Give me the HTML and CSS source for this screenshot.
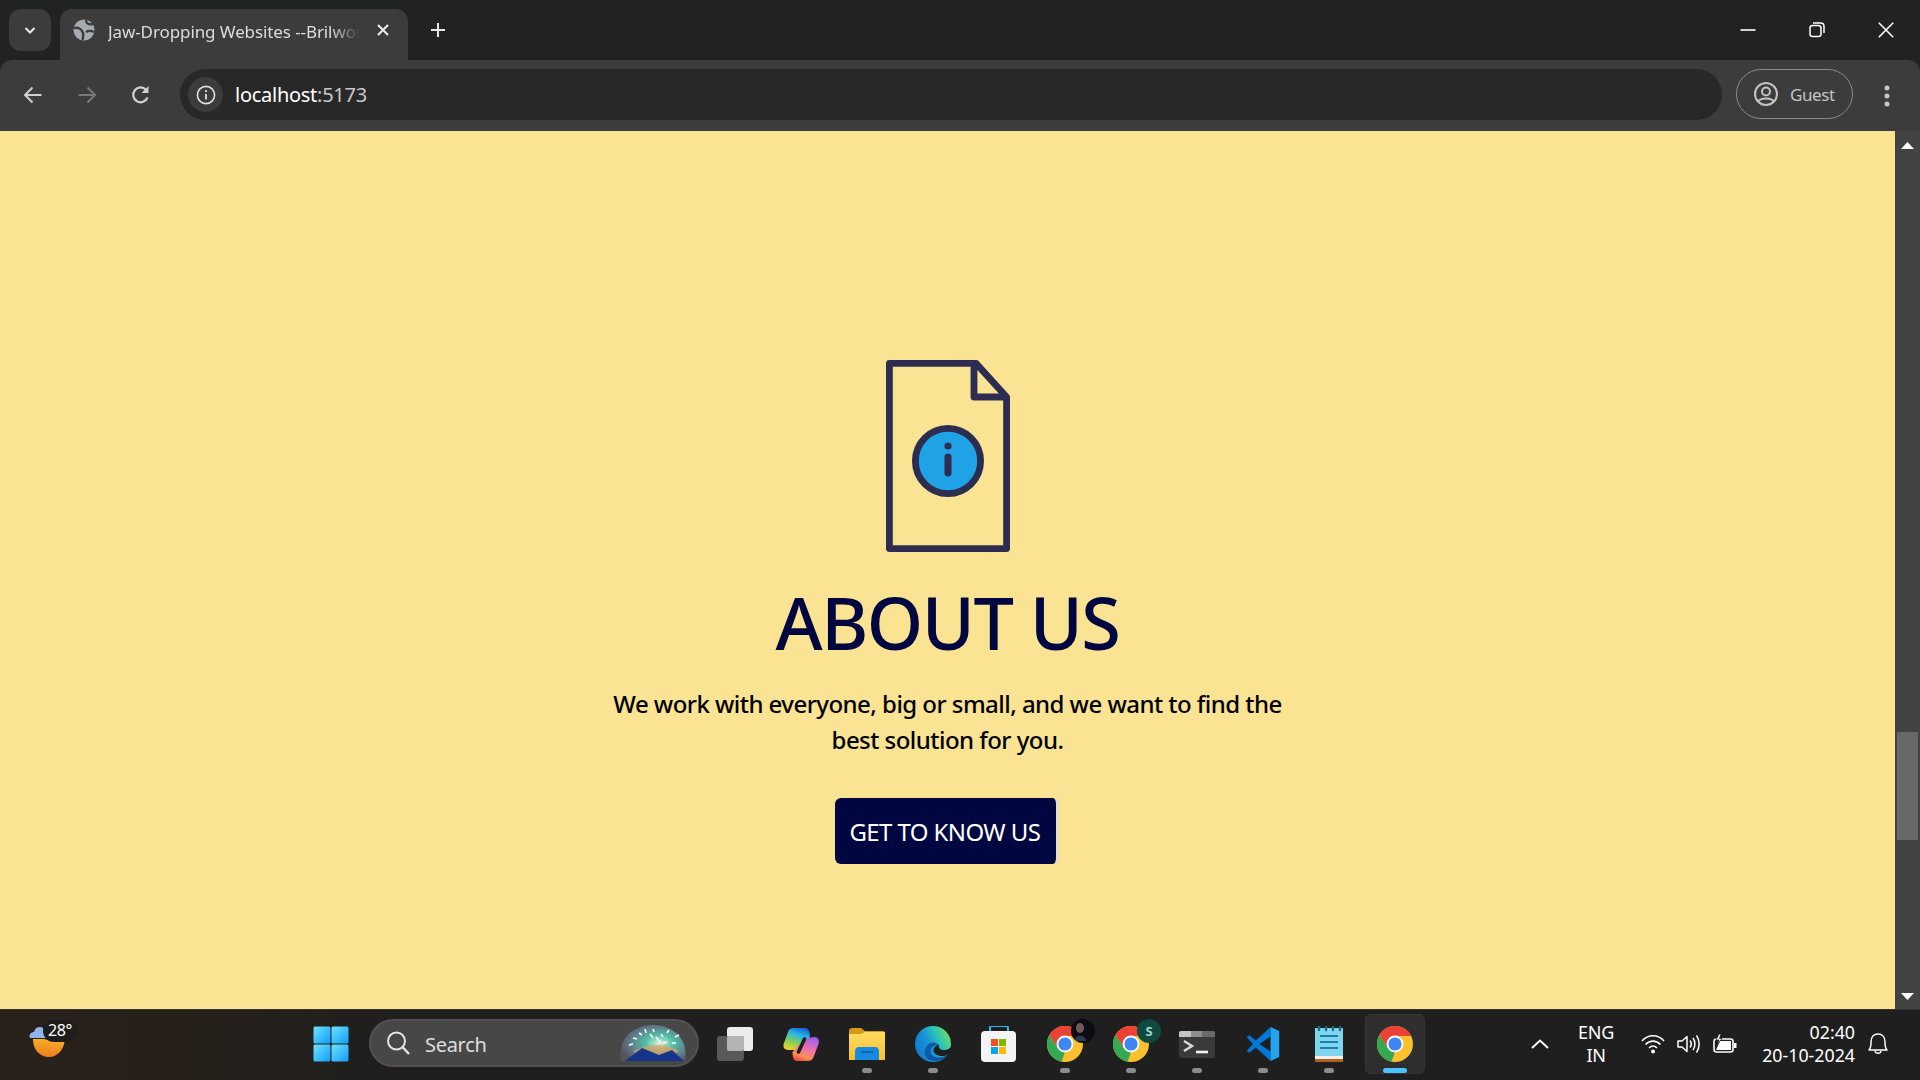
FILE: index.html
```html
<!DOCTYPE html>
<html lang="en">
<head>
<meta charset="utf-8">
<title>Jaw-Dropping Websites --Brilwork</title>
<link rel="stylesheet" href="styles.css">
</head>
<body>
<svg class="defs" width="0" height="0" aria-hidden="true">
  <defs>
    <symbol id="chrome" viewBox="0 0 36 36">
      <circle cx="18" cy="18" r="18" fill="#fbc02d"/>
      <path d="M2.4 9 L11 22 L18 26 L14.5 35.7 A18 18 0 0 1 2.4 9Z" fill="#34a853"/>
      <path d="M18 10 H34.1 A18 18 0 0 0 2.4 9 L11 22 A8 8 0 0 1 18 10Z" fill="#ea4335"/>
      <circle cx="18" cy="18" r="8.4" fill="#fff"/>
      <circle cx="18" cy="18" r="6.6" fill="#3f86f3"/>
    </symbol>
    <linearGradient id="winGrad" x1="0" y1="0" x2="1" y2="1">
      <stop offset="0" stop-color="#6fe2ff"/><stop offset="1" stop-color="#0f9dfb"/>
    </linearGradient>
    <linearGradient id="edgeGrad" x1="1" y1="0.3" x2="0" y2="0.8">
      <stop offset="0" stop-color="#6bdc62"/><stop offset=".3" stop-color="#2cc3bb"/><stop offset=".6" stop-color="#1490d8"/><stop offset="1" stop-color="#0f78cc"/>
    </linearGradient>
    <linearGradient id="copA" x1="0.7" y1="0" x2="0.3" y2="1">
      <stop offset="0" stop-color="#1763dc"/><stop offset=".3" stop-color="#25b4e4"/><stop offset=".65" stop-color="#7fd05a"/><stop offset="1" stop-color="#ecd12e"/>
    </linearGradient>
    <linearGradient id="copB" x1="0.7" y1="0" x2="0.3" y2="1">
      <stop offset="0" stop-color="#9a5ff0"/><stop offset=".45" stop-color="#ea6fb4"/><stop offset=".8" stop-color="#fb8f56"/><stop offset="1" stop-color="#f2503a"/>
    </linearGradient>
    <linearGradient id="folderGrad" x1="0" y1="0" x2="0" y2="1">
      <stop offset="0" stop-color="#ffdc62"/><stop offset="1" stop-color="#f8bf2e"/>
    </linearGradient>
    <linearGradient id="sunGrad" x1="0" y1="0" x2="0" y2="1">
      <stop offset="0" stop-color="#f9b224"/><stop offset="1" stop-color="#ee7f22"/>
    </linearGradient>
    <radialGradient id="bingGrad" cx=".6" cy=".5" r=".62">
      <stop offset="0" stop-color="#dff2d8"/><stop offset=".35" stop-color="#4fc0a6"/><stop offset=".7" stop-color="#5f7f8e"/><stop offset="1" stop-color="#55555c"/>
    </radialGradient>
  </defs>
</svg>

<header class="tabstrip">
  <div class="tab-search">
    <svg class="ico" width="16" height="16" viewBox="0 0 16 16"><path d="M3.5 6 L8 10.5 L12.5 6" fill="none" stroke="#e8e8e8" stroke-width="2"/></svg>
  </div>
  <div class="tab">
    <svg class="ico" width="22" height="22" viewBox="0 0 22 22">
      <circle cx="11" cy="11" r="10.5" fill="#a6abb2"/>
      <path d="M1 9 C6 8 9 11 10 14 C11 17 9 19 10 21 M13 13 C16 11 19 12 21 13 M13 1 C13 4 15 6 20 5" fill="none" stroke="#3c3c3c" stroke-width="2.4"/>
    </svg>
    <span class="tab-title">Jaw-Dropping Websites --Brilwork</span>
    <svg class="ico tab-close" width="14" height="14" viewBox="0 0 14 14"><path d="M2 2 L12 12 M12 2 L2 12" stroke="#ededed" stroke-width="2"/></svg>
  </div>
  <svg class="ico new-tab" width="16" height="16" viewBox="0 0 16 16"><path d="M8 1 V15 M1 8 H15" stroke="#e6e6e6" stroke-width="2"/></svg>
  <div class="window-controls">
    <svg class="ico" width="16" height="16" viewBox="0 0 16 16"><path d="M0.5 8 H15.5" stroke="#fff" stroke-width="1.6"/></svg>
    <svg class="ico" width="16" height="16" viewBox="0 0 16 16"><rect x="1" y="3.5" width="11" height="11" rx="2.5" fill="none" stroke="#fff" stroke-width="1.5"/><path d="M4 1 H11.5 Q15 1 15 4.5 V11" fill="none" stroke="#fff" stroke-width="1.5"/></svg>
    <svg class="ico" width="16" height="16" viewBox="0 0 16 16"><path d="M0.8 0.8 L15.2 15.2 M15.2 0.8 L0.8 15.2" stroke="#fff" stroke-width="1.6"/></svg>
  </div>
</header>

<nav class="toolbar">
  <svg class="ico nav-btn" width="20" height="20" viewBox="0 0 20 20"><path d="M18.5 10 H2 M9.5 2.5 L2 10 L9.5 17.5" fill="none" stroke="#d0d0d0" stroke-width="2"/></svg>
  <svg class="ico nav-btn" width="20" height="20" viewBox="0 0 20 20"><path d="M1.5 10 H18 M10.5 2.5 L18 10 L10.5 17.5" fill="none" stroke="#7a7a7a" stroke-width="2"/></svg>
  <svg class="ico nav-btn" width="20" height="20" viewBox="0 0 20 20"><path d="M16.5 12.5 A7.4 7.4 0 1 1 15 4.8" fill="none" stroke="#d0d0d0" stroke-width="2.2"/><path d="M17.5 1 V8 H10.5Z" fill="#d0d0d0"/></svg>
  <div class="omnibox">
    <span class="site-info">
      <svg class="ico" width="20" height="20" viewBox="0 0 20 20"><circle cx="10" cy="10" r="8.6" fill="none" stroke="#e0e0e0" stroke-width="1.6"/><path d="M10 9 V14.5" stroke="#e0e0e0" stroke-width="1.8"/><circle cx="10" cy="6.2" r="1.1" fill="#e0e0e0"/></svg>
    </span>
    <span class="url">localhost<span class="url-dim">:5173</span></span>
  </div>
  <div class="profile">
    <svg class="ico" width="24" height="24" viewBox="0 0 24 24"><circle cx="12" cy="12" r="11" fill="none" stroke="#c4c4c4" stroke-width="2"/><circle cx="12" cy="9.5" r="4" fill="none" stroke="#c4c4c4" stroke-width="2"/><path d="M4.5 19.5 C6 15.5 18 15.5 19.5 19.5" fill="none" stroke="#c4c4c4" stroke-width="2"/></svg>
    <span>Guest</span>
  </div>
  <div class="kebab"><i></i><i></i><i></i></div>
</nav>

<div class="viewport">
  <main class="page">
    <svg class="doc-icon" width="124" height="192" viewBox="0 0 124 192">
      <path d="M3.4 3.4 H90 L120.6 37 V188.6 H3.4Z" fill="none" stroke="#2c2d50" stroke-width="6.8" stroke-linejoin="round"/>
      <path d="M88 3.4 V37 H120.6" fill="none" stroke="#2c2d50" stroke-width="6.8" stroke-linejoin="round"/>
      <circle cx="62" cy="101" r="32.6" fill="#1fa3e6" stroke="#2c2d50" stroke-width="6.8"/>
      <circle cx="62" cy="86" r="3.6" fill="#2c2d50"/>
      <path d="M62 97 V113" stroke="#2c2d50" stroke-width="7" stroke-linecap="round"/>
    </svg>
    <h1 class="headline">ABOUT US</h1>
    <p class="lede">We work with everyone, big or small, and we want to find the<br>best solution for you.</p>
    <a class="cta">GET TO KNOW US</a>
  </main>
  <aside class="scrollbar">
    <svg class="ico arrow" width="13" height="7" viewBox="0 0 13 7"><path d="M6.5 0 L13 7 H0Z" fill="#fff"/></svg>
    <div class="thumb"></div>
    <svg class="ico arrow" width="13" height="7" viewBox="0 0 13 7"><path d="M6.5 7 L13 0 H0Z" fill="#fff"/></svg>
  </aside>
</div>

<footer class="taskbar">
  <div class="weather">
    <svg class="ico" width="40" height="36" viewBox="0 0 40 36">
      <path d="M5 16 C5 28 13 34 21 34 C30 34 37 26 37 14 L28 14 C26 19 20 17 16 16Z" fill="url(#sunGrad)"/>
      <path d="M2 15 C0 11 4 9 6 9 C7 4 12 3 15 5 L20 15Z" fill="#8fb4ef"/>
    </svg>
    <span class="temp">28°</span>
  </div>
  <div class="task-btn start">
    <svg class="ico" width="36" height="36" viewBox="0 0 36 36">
      <rect x="0.5" y="0.5" width="17" height="17" rx="1.5" fill="url(#winGrad)"/>
      <rect x="18.5" y="0.5" width="17" height="17" rx="1.5" fill="url(#winGrad)"/>
      <rect x="0.5" y="18.5" width="17" height="17" rx="1.5" fill="url(#winGrad)"/>
      <rect x="18.5" y="18.5" width="17" height="17" rx="1.5" fill="url(#winGrad)"/>
    </svg>
  </div>
  <div class="search">
    <svg class="ico" width="26" height="26" viewBox="0 0 26 26"><circle cx="11.5" cy="11" r="8.5" fill="none" stroke="#e4e4e4" stroke-width="2"/><path d="M17.5 17 L24 24" stroke="#e4e4e4" stroke-width="2.4"/></svg>
    <span class="search-label">Search</span>
    <svg class="search-art" width="68" height="37" viewBox="0 0 68 37">
      <path d="M2 36 C-2 12 16 0 34 0 C52 0 70 12 66 36Z" fill="url(#bingGrad)"/>
      <path d="M14 26 Q40 14 60 26 L50 32 H24Z" fill="#e9a060" fill-opacity=".7"/>
      <path d="M6 36 L23 23 L40 30 L53 25 L65 36Z" fill="#17348c"/>
      <path d="M10 20 l4 -1 M14 13 l4 1 M20 8 l3 2 M26 4 l1 4 M31 9 l3 4 M34 4 l1 3 M37 12 l5 6 M44 18 l4 -1 M50 5 l-2 3 M56 12 l4 -2 M53 18 l4 0 M42 9 l2 3" stroke="#fff" stroke-width="1.6"/>
    </svg>
  </div>
  <div class="apps">
    <div class="task-btn">
      <svg class="ico" width="36" height="34" viewBox="0 0 36 34">
        <rect x="10" y="0" width="26" height="24" rx="3" fill="#ececec"/>
        <rect x="0" y="9" width="27" height="25" rx="3" fill="#5e5e5e" fill-opacity=".92"/>
        <rect x="10" y="9" width="17" height="15" rx="2" fill="#b4b4b4"/>
      </svg>
    </div>
    <div class="task-btn">
      <svg class="ico" width="36" height="33" viewBox="0 0 36 33">
        <path d="M10 0 H22 C26 0 27 5 27 9 L16 22 H5 C1 22 -0.5 19 1 15 L5 4 C6 1 8 0 10 0Z" fill="url(#copA)"/>
        <path d="M31 9 C35 9 37 12 35.5 16 L31 28 C30 31 28 33 25 33 H14 C10 33 9.5 28 9.5 24 L21 11Z" fill="url(#copB)"/>
        <path d="M21.5 11 L15.5 24" stroke="#1f1f1f" stroke-width="3.6" stroke-linecap="round"/>
      </svg>
    </div>
    <div class="task-btn has-dot">
      <svg class="ico" width="36" height="32" viewBox="0 0 36 32">
        <path d="M0 3 Q0 0 3 0 H12 L16 3 H34 Q36 3 36 5 V32 H0Z" fill="#d69a12"/>
        <path d="M0 6 H12 L16 4 H36 V32 H0Z" fill="url(#folderGrad)"/>
        <path d="M6 32 V24 Q6 19 10 19 H26 Q30 19 30 24 V32Z" fill="#1689e0"/>
        <path d="M12 24 H24" stroke="#0c5aa8" stroke-width="1.6"/>
      </svg>
      <i class="dot"></i>
    </div>
    <div class="task-btn has-dot">
      <svg class="ico" width="36" height="36" viewBox="0 0 36 36">
        <circle cx="18" cy="18" r="18" fill="url(#edgeGrad)"/>
        <path d="M36 21 C34 23.5 31 24 28 24 C25 24 23.5 21.5 24 19 C19 19.5 17 24 20 27.5 C24 31 30 30.5 33 28.5 L30 36 H36Z" fill="#1f1f1f"/>
        <path d="M24 19 C18 18 13 24 17 29 C21 33 29 32 33 28 C29 35 20 37 13 33 C8 29 9 22 14 18 C16 16 21 15.5 24 19Z" fill="#0e5aa6"/>
      </svg>
      <i class="dot"></i>
    </div>
    <div class="task-btn">
      <svg class="ico" width="36" height="36" viewBox="0 0 36 36">
        <path d="M9 6 V2 Q9 0 11 0 H25 Q27 0 27 2 V6" fill="none" stroke="#29b6f0" stroke-width="2"/>
        <rect x="0" y="5" width="35" height="31" rx="4" fill="#f4f4f4"/>
        <rect x="10" y="13" width="7" height="7" fill="#f0511e"/><rect x="18" y="13" width="7" height="7" fill="#80b800"/>
        <rect x="10" y="21" width="7" height="7" fill="#00a4ef"/><rect x="18" y="21" width="7" height="7" fill="#ffb900"/>
      </svg>
    </div>
    <div class="task-btn has-dot has-badge">
      <svg class="ico" width="36" height="36"><use href="#chrome"/></svg>
      <span class="badge badge-photo"><svg width="24" height="24" viewBox="0 0 24 24"><ellipse cx="9" cy="9" rx="4" ry="5" fill="#6e5a58"/><path d="M4 22 C4 15 14 15 15 22Z" fill="#2c3a5a"/></svg></span>
      <i class="dot"></i>
    </div>
    <div class="task-btn has-dot has-badge">
      <svg class="ico" width="36" height="36"><use href="#chrome"/></svg>
      <span class="badge badge-s">S</span>
      <i class="dot"></i>
    </div>
    <div class="task-btn has-dot">
      <svg class="ico" width="36" height="27" viewBox="0 0 36 27">
        <rect width="36" height="27" rx="2" fill="#3a3a3a"/>
        <path d="M2 0 H12 V6 H0 V2 Q0 0 2 0Z" fill="#c4c4c4"/><rect x="12" y="0" width="11" height="6" fill="#8f8f8f"/><path d="M23 0 H34 Q36 0 36 2 V6 H23Z" fill="#6a6a6a"/>
        <path d="M5 10 L13 15 L5 20" fill="none" stroke="#dcdcdc" stroke-width="2.4"/><path d="M17 21 H29" stroke="#f4f4f4" stroke-width="2.6"/>
      </svg>
      <i class="dot"></i>
    </div>
    <div class="task-btn has-dot">
      <svg class="ico" width="36" height="36" viewBox="0 0 100 100">
        <path d="M71 3 L30 40 12 26 5 31 22 50 5 69 12 74 30 60 71 97 V71 L40 50 71 29Z" fill="#0078d4"/>
        <path d="M71 3 L95 14 V86 L71 97Z" fill="#24a5f0"/>
      </svg>
      <i class="dot"></i>
    </div>
    <div class="task-btn has-dot">
      <svg class="ico" width="28" height="36" viewBox="0 0 28 36">
        <rect x="0" y="2" width="28" height="28" fill="#7fd4ee"/>
        <rect x="0" y="30" width="28" height="3" fill="#f2efe8"/><rect x="0" y="33" width="28" height="3" fill="#b0621c"/>
        <path d="M4 0 V4 M11 0 V4 M18 0 V4 M25 0 V4" stroke="#1b6a8a" stroke-width="2.4" stroke-linecap="round"/>
        <path d="M5 10 H23 M5 16 H23 M5 22 H23" stroke="#1680a8" stroke-width="2"/>
      </svg>
      <i class="dot"></i>
    </div>
    <div class="task-btn active has-dot">
      <svg class="ico" width="36" height="36"><use href="#chrome"/></svg>
      <i class="dot dot-active"></i>
    </div>
  </div>
  <div class="tray">
    <svg class="ico tray-chevron" width="18" height="10" viewBox="0 0 18 10"><path d="M1 9 L9 1.5 L17 9" fill="none" stroke="#fff" stroke-width="1.8"/></svg>
    <div class="lang"><span>ENG</span><span>IN</span></div>
    <div class="tray-icons">
      <svg class="ico" width="24" height="20" viewBox="0 0 24 20"><path d="M1 7 C7 0 17 0 23 7 M4.5 10.5 C9 6 15 6 19.5 10.5 M8 14 C10.5 11.5 13.5 11.5 16 14" fill="none" stroke="#fff" stroke-width="1.6"/><circle cx="12" cy="17.5" r="2" fill="#fff"/></svg>
      <svg class="ico" width="24" height="22" viewBox="0 0 24 22"><path d="M1 8 H5 L10 3.5 V18.5 L5 14 H1Z" fill="none" stroke="#fff" stroke-width="1.5" stroke-linejoin="round"/><path d="M13 7.5 C14.5 9.5 14.5 12.5 13 14.5 M16 5 C18.5 8.5 18.5 13.5 16 17 M19.5 2.5 C23 7.5 23 14.5 19.5 19.5" fill="none" stroke="#fff" stroke-width="1.5"/></svg>
      <svg class="ico" width="24" height="20" viewBox="0 0 24 20"><rect x="1" y="5" width="19" height="13" rx="2.5" fill="none" stroke="#fff" stroke-width="1.6"/><path d="M3 16 L7 7 H18 V16Z" fill="#fff"/><rect x="21" y="9" width="2.5" height="5" fill="#fff"/><path d="M6 0 L3 6 H6 L4 11 L9 4.5 H6.5 L8 0Z" fill="#fff" stroke="#1f1f1f" stroke-width=".8"/></svg>
    </div>
    <div class="clock"><span>02:40</span><span>20-10-2024</span></div>
    <svg class="ico tray-bell" width="20" height="22" viewBox="0 0 20 22"><path d="M1 17 C3 15 3 13 3 9 C3 4 6 1 10 1 C14 1 17 4 17 9 C17 13 17 15 19 17Z" fill="none" stroke="#fff" stroke-width="1.5" stroke-linejoin="round"/><path d="M7 18 C7.5 21 12.5 21 13 18" fill="none" stroke="#fff" stroke-width="1.5"/></svg>
  </div>
</footer>
</body>
</html>
```

FILE: styles.css
```css
* { box-sizing: border-box; }
html, body { margin: 0; height: 100%; }
body {
  width: 1920px;
  height: 1080px;
  overflow: hidden;
  display: flex;
  flex-direction: column;
  background: #202322;
  font-family: "Noto Sans", "Open Sans", sans-serif;
  color: #fff;
}
.defs { position: absolute; }
.ico { display: block; flex: none; }

/* Tab strip */
.tabstrip {
  height: 60px;
  flex: none;
  display: flex;
  align-items: flex-start;
  padding: 9px 0 0 9px;
  background: #202322;
}
.tab-search {
  width: 42px;
  height: 42px;
  border-radius: 12px;
  background: #3c3c3c;
  display: flex;
  align-items: center;
  justify-content: center;
}
.tab {
  width: 348px;
  height: 51px;
  margin-left: 9px;
  padding: 0 16px 9px 13px;
  display: flex;
  align-items: center;
  background: #3c3c3c;
  border-radius: 12px 12px 0 0;
}
.tab-title {
  width: 252px;
  margin-left: 13px;
  padding-top: 2px;
  font-size: 17px;
  letter-spacing: -0.1px;
  color: #dcdcdc;
  white-space: nowrap;
  overflow: hidden;
  -webkit-mask-image: linear-gradient(to right, #000 88%, transparent 100%);
  mask-image: linear-gradient(to right, #000 88%, transparent 100%);
}
.tab-close { margin-left: 16px; }
.new-tab { margin: 13px 0 0 22px; }
.window-controls {
  margin-left: auto;
  padding: 13px 26px 0 0;
  display: flex;
  gap: 53px;
}

/* Toolbar */
.toolbar {
  height: 71px;
  flex: none;
  display: flex;
  align-items: flex-start;
  padding: 9px 0 0 23px;
  background: #3c3c3c;
  border-radius: 12px 12px 0 0;
}
.nav-btn { margin: 16px 34px 0 0; }
.nav-btn:nth-child(3) { margin-right: 29px; }
.omnibox {
  width: 1542px;
  height: 51px;
  padding-left: 8px;
  display: flex;
  align-items: center;
  background: #282828;
  border-radius: 26px;
}
.site-info {
  width: 35px;
  height: 35px;
  border-radius: 50%;
  background: #3c3c3c;
  display: flex;
  align-items: center;
  justify-content: center;
}
.url {
  margin-left: 12px;
  font-size: 20px;
  letter-spacing: -0.27px;
  color: #fff;
}
.url-dim { color: #c8c8c8; }
.profile {
  width: 117px;
  height: 50px;
  margin-left: 14px;
  padding-left: 17px;
  display: flex;
  align-items: center;
  gap: 12px;
  border: 1px solid #8a8a8a;
  border-radius: 25px;
  font-size: 17px;
  letter-spacing: -0.4px;
  color: #c4c4c4;
}
.kebab {
  margin: 17px 0 0 32px;
  display: flex;
  flex-direction: column;
  gap: 4px;
}
.kebab i {
  width: 4px;
  height: 4px;
  border-radius: 50%;
  background: #c8c8c8;
  box-shadow: 0 0 0 .5px #c8c8c8;
}

/* Viewport */
.viewport {
  height: 878px;
  flex: none;
  display: flex;
}
.page {
  flex: 1;
  display: flex;
  flex-direction: column;
  align-items: center;
  padding-top: 229px;
  background: #fae393;
}
.doc-icon { display: block; flex: none; }
.headline {
  margin: 25px 0 0;
  font-size: 72px;
  line-height: 90px;
  font-weight: 500;
  letter-spacing: -1.5px;
  color: #000640;
}
.lede {
  margin: 19px 0 0;
  font-size: 24px;
  line-height: 36px;
  font-weight: 500;
  text-align: center;
  letter-spacing: -0.54px;
  color: #000;
  white-space: nowrap;
}
.cta {
  width: 224px;
  height: 66px;
  margin-top: 40px;
  margin-right: 2px;
  padding-left: 15px;
  display: flex;
  align-items: center;
  font-size: 24px;
  letter-spacing: -0.6px;
  white-space: nowrap;
  color: #fff;
  background: #000640;
  border-right: 3px solid #e4e0c8;
  border-radius: 6px;
}
.scrollbar {
  width: 25px;
  flex: none;
  display: flex;
  flex-direction: column;
  align-items: center;
  background: #434343;
  padding: 11px 0 9px;
}
.thumb {
  width: 21px;
  height: 108px;
  margin: 583px 0 auto;
  background: #686868;
}

/* Taskbar */
.taskbar {
  height: 71px;
  flex: none;
  display: flex;
  align-items: flex-start;
  padding-top: 4px;
  background: linear-gradient(to right, #2a211b 0, #262019 180px, #1f1f1f 420px);
  border-top: 1px solid #333;
}
.weather {
  width: 301px;
  padding: 9px 0 0 28px;
  position: relative;
}
.temp {
  position: absolute;
  top: 6px;
  left: 43px;
  width: 34px;
  height: 22px;
  text-align: center;
  background: #1f1d1b;
  border-radius: 11px;
  font-size: 16px;
  letter-spacing: -0.4px;
  line-height: 21px;
  color: #fff;
}
.task-btn {
  width: 60px;
  height: 60px;
  flex: none;
  display: flex;
  align-items: center;
  justify-content: center;
  position: relative;
  border-radius: 6px;
}
.task-btn.active { background: #2e2e2e; box-shadow: inset 0 0 0 1px #353535; }
.dot {
  position: absolute;
  left: 25px;
  bottom: 1px;
  width: 10px;
  height: 5px;
  border-radius: 3px;
  background: #8c8c8c;
}
.dot-active {
  left: 18px;
  width: 24px;
  background: #4cc2ff;
}
.badge {
  position: absolute;
  top: 5px;
  left: 36px;
  width: 24px;
  height: 24px;
  border-radius: 50%;
  display: flex;
  align-items: center;
  justify-content: center;
  overflow: hidden;
}
.badge-photo { background: #0c0d12; }
.badge-s { background: #0e4a40; color: #9fd8c8; font-size: 13px; font-weight: 700; }
.search {
  width: 330px;
  height: 48px;
  margin: 5px 6px 0 8px;
  padding: 0 10px 0 14px;
  display: flex;
  align-items: center;
  flex: none;
  background: #474747;
  border: 2px solid #525252;
  border-radius: 24px;
}
.search-label {
  margin-left: 14px;
  padding-top: 2px;
  font-size: 20px;
  letter-spacing: -0.3px;
  color: #dedede;
}
.search-art { margin-left: auto; }
.apps {
  display: flex;
  gap: 6px;
  flex: none;
}
.tray {
  margin-left: auto;
  height: 60px;
  display: flex;
  align-items: center;
  padding-right: 32px;
}
.tray-chevron { margin-right: 20px; }
.lang {
  width: 54px;
  display: flex;
  flex-direction: column;
  align-items: center;
  font-size: 18px;
  line-height: 23px;
  letter-spacing: -0.3px;
}
.tray-icons {
  margin-left: 18px;
  display: flex;
  align-items: center;
  gap: 12px;
}
.clock {
  width: 118px;
  display: flex;
  flex-direction: column;
  align-items: flex-end;
  font-size: 17.8px;
  line-height: 23.5px;
}
.tray-bell { margin-left: 13px; }
```
